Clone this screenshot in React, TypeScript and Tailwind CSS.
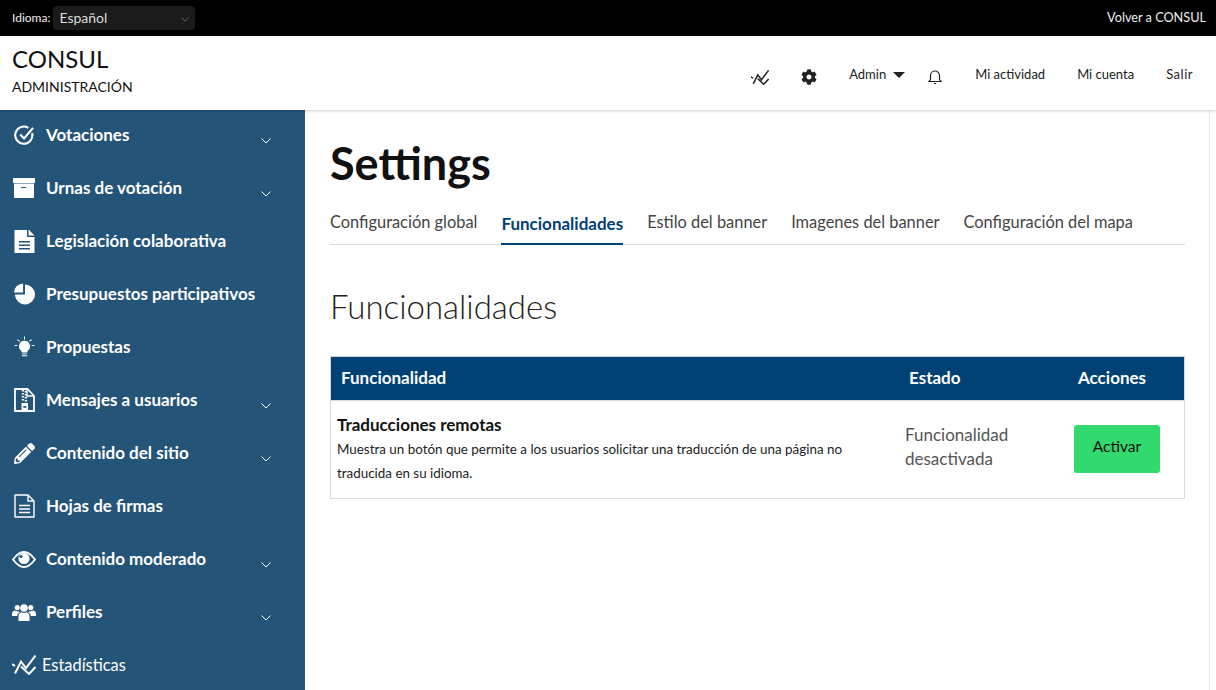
import React from 'react';
import { FaPencilAlt, FaCog } from 'react-icons/fa';

const BODY = "font-['Lato','Noto_Sans',sans-serif]";

const ChartIcon = ({ className }: { className?: string }) => (
  <svg viewBox="0 0 24 20" className={className} fill="none" stroke="currentColor" strokeWidth="2">
    <path d="M3 18.5 L9 6.5 L14 13 L23.5 0.5" />
    <path d="M0 9 L3 11 M9 11.5 L17 19 L23.5 12" />
  </svg>
);

const CheckIcon = () => (
  <svg viewBox="0 0 22 22" className="w-[21px] h-[21px]" fill="none" stroke="currentColor" strokeWidth="2.2">
    <path d="M19 8.5 A9 9 0 1 1 15 3" />
    <path d="M6.5 10 L10.5 14 L20 3" />
  </svg>
);

const ArchiveIcon = () => (
  <svg viewBox="0 0 22 20" className="w-[22px] h-[20px]" fill="currentColor">
    <rect x="0" y="0" width="22" height="5" rx=".5" />
    <path d="M1 5.5 H21 V20 H1 Z M8 9 V10 H13 V9 Z" fillRule="evenodd" />
  </svg>
);

const SolidFileIcon = () => (
  <svg viewBox="0 0 21 24" className="w-[21px] h-[24px]" fill="currentColor">
    <path d="M0.5 1 H13 V8 H20.5 V24 H0.5 Z M5 12 V13.5 H16 V12 Z M5 15.5 V17 H16 V15.5 Z M5 19 V20.5 H16 V19 Z" fillRule="evenodd" />
    <path d="M14.5 0.5 L20.5 6.5 H14.5 Z" />
  </svg>
);

const OutlineFileIcon = () => (
  <svg viewBox="0 0 21 24" className="w-[21px] h-[24px]" fill="none" stroke="currentColor" strokeWidth="1.4">
    <path d="M1 1 H14 L20 7 V23 H1 Z" strokeLinejoin="round" />
    <path d="M14 1 V7 H20" />
    <path d="M5 11.5 H16 M5 15 H16 M5 18.5 H16" strokeWidth="1.5" />
  </svg>
);

const PieIcon = () => (
  <svg viewBox="0 0 22 22" className="w-[21px] h-[22px]" fill="currentColor">
    <path d="M11.5 10.5 V1 A10.5 10.5 0 1 1 1 11.5 H11.5 Z" />
    <path d="M9.5 9.5 H0 A9.5 9.5 0 0 1 9.5 0 Z" />
  </svg>
);

const BulbIcon = () => (
  <svg viewBox="0 0 22 22" className="w-[21px] h-[22px]" fill="currentColor">
    <path d="M11 4.5 a5.8 5.8 0 0 1 4 10 c-.8.9-1.1 1.5-1.2 2.3 H8.2 c-.1-.8-.4-1.4-1.2-2.3 A5.8 5.8 0 0 1 11 4.5z" />
    <rect x="8.2" y="17.6" width="5.6" height="1.2" opacity=".75" />
    <rect x="8.2" y="19.4" width="5.6" height="1.4" opacity=".75" />
    <rect x="10.5" y="0" width="1" height="3.2" />
    <rect x="0.5" y="9" width="3" height="1" />
    <rect x="18.5" y="9" width="3" height="1" />
    <path d="M3.8 3 l2.6 1.8 -.5.8 -2.6-1.8z M18.2 3 l-2.6 1.8 .5.8 2.6-1.8z" />
  </svg>
);

const ZipIcon = () => (
  <svg viewBox="0 0 21 24" className="w-[21px] h-[24px]" fill="none" stroke="currentColor" strokeWidth="1.8">
    <path d="M1 1 H13.5 L20 8 V23 H1 Z" />
    <path d="M13 1.5 V8 H19.5" strokeWidth="1.4" />
    <path d="M9 2 V14 M12 3 V14" strokeDasharray="1.5 1.5" strokeWidth="2.4" />
    <rect x="7.5" y="15" width="6.5" height="7.5" fill="currentColor" stroke="none" />
    <rect x="9.3" y="18" width="3" height="1.8" fill="#245478" stroke="none" />
  </svg>
);

const EyeIcon = () => (
  <svg viewBox="0 0 24 17" className="w-[24px] h-[17px]">
    <path d="M1 8.5 C5 3 8.5 1 12 1 C15.5 1 19 3 23 8.5 C19 14 15.5 16 12 16 C8.5 16 5 14 1 8.5Z" fill="none" stroke="currentColor" strokeWidth="1.8" />
    <circle cx="12" cy="7.5" r="5.6" fill="currentColor" />
    <circle cx="9" cy="5.5" r="1.6" fill="#245478" />
  </svg>
);

const UsersIcon = () => (
  <svg viewBox="0 0 24 17" className="w-[24px] h-[17px]" fill="currentColor">
    <circle cx="12" cy="4" r="3.8" />
    <path d="M6.5 17 V12.5 C6.5 10 8 8.8 9.8 8.3 C11 9.3 13 9.3 14.2 8.3 C16 8.8 17.5 10 17.5 12.5 V17 Z" />
    <circle cx="5.2" cy="3.6" r="2.6" />
    <circle cx="18.8" cy="3.6" r="2.6" />
    <path d="M0 12 V10 C0 8 1.2 7 2.8 6.6 C4 7.4 5.3 7.4 6.4 7 C6.8 7.8 7.2 8.2 7.8 8.4 C6 9.2 5.2 10.4 5.2 12 Z" />
    <path d="M24 12 V10 C24 8 22.8 7 21.2 6.6 C20 7.4 18.7 7.4 17.6 7 C17.2 7.8 16.8 8.2 16.2 8.4 C18 9.2 18.8 10.4 18.8 12 Z" />
  </svg>
);

const Chevron = () => (
  <svg viewBox="0 0 10 6" className="w-[10px] h-[6px] mt-[9px]" fill="none" stroke="currentColor" strokeWidth="1">
    <path d="M.5 .5 L5 5 L9.5 .5" />
  </svg>
);

const menu: { label: string; icon: React.ReactNode; chevron?: boolean }[] = [
  { label: 'Votaciones', icon: <CheckIcon />, chevron: true },
  { label: 'Urnas de votación', icon: <ArchiveIcon />, chevron: true },
  { label: 'Legislación colaborativa', icon: <SolidFileIcon /> },
  { label: 'Presupuestos participativos', icon: <PieIcon /> },
  { label: 'Propuestas', icon: <BulbIcon /> },
  { label: 'Mensajes a usuarios', icon: <ZipIcon />, chevron: true },
  { label: 'Contenido del sitio', icon: <FaPencilAlt className="w-[21px] h-[21px]" />, chevron: true },
  { label: 'Hojas de firmas', icon: <OutlineFileIcon /> },
  { label: 'Contenido moderado', icon: <EyeIcon />, chevron: true },
  { label: 'Perfiles', icon: <UsersIcon />, chevron: true },
];

const tabs = ['Configuración global', 'Funcionalidades', 'Estilo del banner', 'Imagenes del banner', 'Configuración del mapa'];

export default function App() {
  return (
    <div className={`${BODY} w-[1216px] h-[690px] overflow-hidden flex flex-col bg-white text-[#222]`}>
      {/* Top bar */}
      <div className="h-[36px] shrink-0 bg-black text-white flex items-center justify-between pl-3 pr-[10px]">
        <div className="flex items-center">
          <span className="text-[12px] text-[#eee]">Idioma:</span>
          <div className="ml-[3px] w-[142px] h-[24px] rounded bg-[#1b1b1b] flex items-center justify-between pl-[6px] pr-[6px] pb-[2px] text-[14px] text-[#ddd]">
            <span>Español</span>
            <svg viewBox="0 0 10 6" className="w-[8px] h-[5px] mt-[5px] text-[#777]" fill="none" stroke="currentColor" strokeWidth="1">
              <path d="M.5 .5 L5 5 L9.5 .5" />
            </svg>
          </div>
        </div>
        <span className="text-[12.7px] text-[#eee]">Volver a CONSUL</span>
      </div>

      {/* Header */}
      <header className="relative z-10 h-[74px] shrink-0 bg-white shadow-[0_1px_3px_rgba(0,0,0,0.2)] flex items-center justify-between pl-3 pr-[23px]">
        <div className="text-[#111] mb-[5px]">
          <div className="text-[24px] leading-[30px]">CONSUL</div>
          <div className="text-[14px] leading-[20px] mt-[3px]">ADMINISTRACIÓN</div>
        </div>
        <div className="flex items-center text-[13px] text-[#222] pt-[4px]">
          <ChartIcon className="w-[18px] h-[15px] mt-[4px]" />
          <FaCog className="w-[16px] h-[16px] ml-[32px] mt-[4px]" />
          <span className="ml-[32px]">Admin</span>
          <span className="ml-[7px] w-0 h-0 border-x-[6px] border-x-transparent border-t-[6px] border-t-[#222]" />
          <svg viewBox="0 0 14 16" className="w-[14px] h-[16px] ml-[23px] mt-[4px]" fill="none" stroke="currentColor" strokeWidth="1.2">
            <path d="M1 12.5 H13 L11.5 10.5 V6.5 A4.5 4.5 0 0 0 2.5 6.5 V10.5 Z" />
            <path d="M6 14.5 H8" />
          </svg>
          <span className="ml-[33px]">Mi actividad</span>
          <span className="ml-[32px]">Mi cuenta</span>
          <span className="ml-[32px] tracking-[0.5px]">Salir</span>
        </div>
      </header>

      <div className="flex flex-1 min-h-0">
        {/* Sidebar */}
        <aside className="w-[305px] shrink-0 bg-[#245478] text-white">
          {menu.map((item) => (
            <div key={item.label} className="h-[53px] flex items-center pr-[34px]">
              <div className="w-[46px] flex justify-center pl-[2px] mb-[3px] shrink-0">{item.icon}</div>
              <span className="flex-1 text-[17px] font-bold mb-[3px]">{item.label}</span>
              {item.chevron && <Chevron />}
            </div>
          ))}
          <div className="h-[53px] flex items-center">
            <div className="w-[42px] flex justify-center pl-[6px] shrink-0 mb-[3px]">
              <ChartIcon className="w-[24px] h-[20px]" />
            </div>
            <span className="text-[16.4px] mb-[3px]">Estadísticas</span>
          </div>
        </aside>

        {/* Content */}
        <main className="flex-1 min-w-0 mr-[6px] border-r border-[#e9e9e9] pl-[25px] pr-[24px] pt-[28px]">
          <h1 className="text-[45px] leading-[50px] font-bold text-[#111]">Settings</h1>
          <nav className="flex gap-[24px] mt-[12px] h-[45px] border-b border-[#ddd] text-[16.4px] text-[#444]">
            {tabs.map((tab) =>
              tab === 'Funcionalidades' ? (
                <span key={tab} className="h-[45px] pt-[11px] text-[17px] font-bold text-[#004176] border-b-2 border-[#004176]">
                  {tab}
                </span>
              ) : (
                <span key={tab} className="pt-[10px]">{tab}</span>
              )
            )}
          </nav>
          <h2 className="text-[33px] leading-[40px] font-light text-[#222] mt-[41px]">Funcionalidades</h2>

          <div className="mt-[30px] border border-[#d5d8dc]">
            <div className="h-[43px] bg-[#004176] text-white font-bold text-[17px] flex items-center pb-[2px]">
              <span className="w-[578px] pl-[10px] shrink-0">Funcionalidad</span>
              <span className="w-[169px] shrink-0">Estado</span>
              <span>Acciones</span>
            </div>
            <div className="h-[98px] flex items-center border-t border-[#d5d8dc]">
              <div className="w-[578px] shrink-0 pl-[6px] pr-[40px] pb-[2px]">
                <div className="text-[17px] font-bold text-[#111] leading-[24px]">Traducciones remotas</div>
                <p className="text-[13.4px] leading-[24px] text-[#222]">
                  Muestra un botón que permite a los usuarios solicitar una traducción de una página no traducida en su idioma.
                </p>
              </div>
              <div className="w-[169px] shrink-0 -ml-[4px] pr-[20px] pb-[6px] text-[17px] leading-[24px] text-[#555]">
                Funcionalidad desactivada
              </div>
              <button className="w-[86px] h-[48px] rounded-[3px] bg-[#32d96f] text-[15.5px] text-[#111] pb-[4px] mb-[2px]">Activar</button>
            </div>
          </div>
        </main>
      </div>
    </div>
  );
}
